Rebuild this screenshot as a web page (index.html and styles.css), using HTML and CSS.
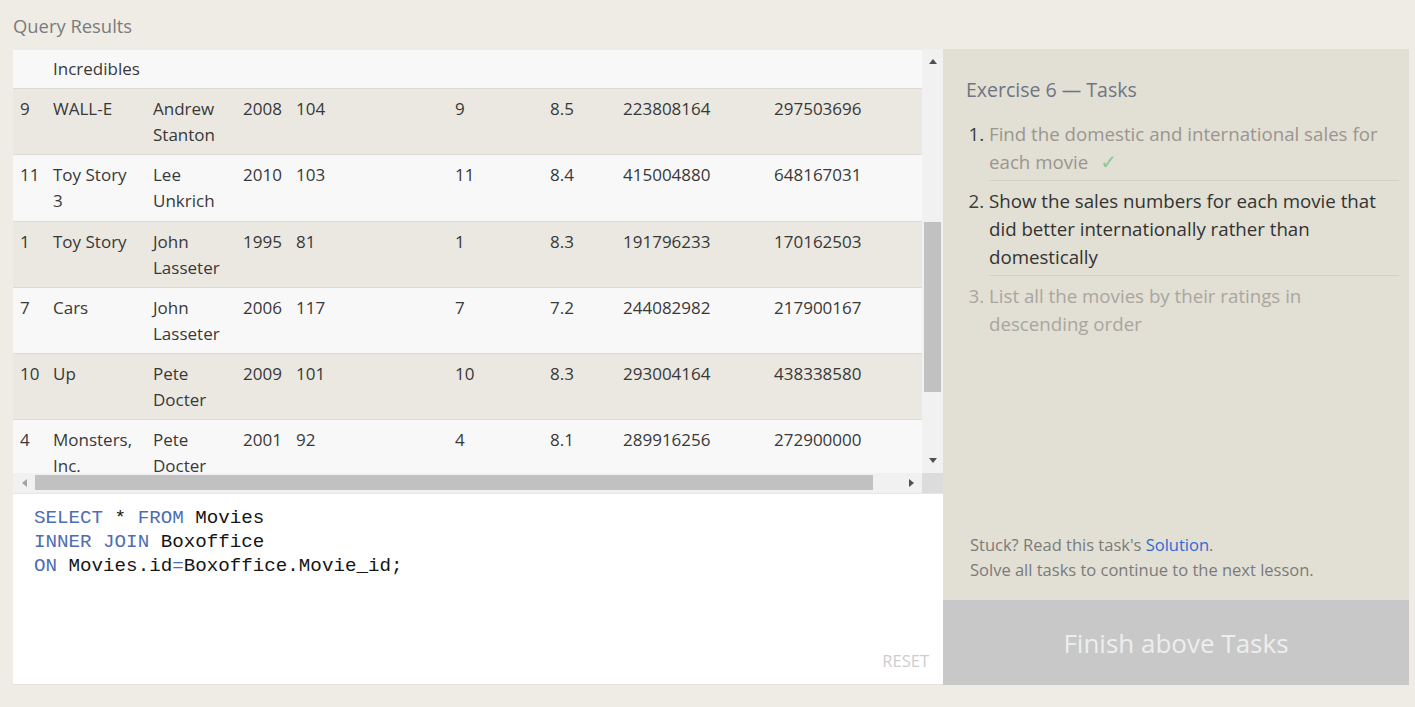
FILE: index.html
```html
<!DOCTYPE html>
<html lang="en">
<head>
<meta charset="utf-8">
<title>SQL Lesson - Exercise 6</title>
<link rel="stylesheet" href="styles.css">
</head>
<body>
<div class="page">
  <h2 class="results-title">Query Results</h2>
  <div class="workspace">
    <section class="query-pane">
      <div class="results">
        <div class="results-viewport">
          <table class="results-table">
            <colgroup>
              <col class="c-id"><col class="c-title"><col class="c-dir"><col class="c-year"><col class="c-len"><col class="c-mid"><col class="c-rating"><col class="c-dom"><col class="c-intl">
            </colgroup>
            <tbody>
              <tr class="light"><td>6</td><td class="title">The Incredibles</td><td>Brad Bird</td><td>2004</td><td>116</td><td>6</td><td>8</td><td>261441092</td><td>370001000</td></tr>
              <tr class="dark"><td>9</td><td class="title">WALL-E</td><td>Andrew Stanton</td><td>2008</td><td>104</td><td>9</td><td>8.5</td><td>223808164</td><td>297503696</td></tr>
              <tr class="light"><td>11</td><td class="title">Toy Story 3</td><td>Lee Unkrich</td><td>2010</td><td>103</td><td>11</td><td>8.4</td><td>415004880</td><td>648167031</td></tr>
              <tr class="dark"><td>1</td><td class="title">Toy Story</td><td>John Lasseter</td><td>1995</td><td>81</td><td>1</td><td>8.3</td><td>191796233</td><td>170162503</td></tr>
              <tr class="light"><td>7</td><td class="title">Cars</td><td>John Lasseter</td><td>2006</td><td>117</td><td>7</td><td>7.2</td><td>244082982</td><td>217900167</td></tr>
              <tr class="dark"><td>10</td><td class="title">Up</td><td>Pete Docter</td><td>2009</td><td>101</td><td>10</td><td>8.3</td><td>293004164</td><td>438338580</td></tr>
              <tr class="light"><td>4</td><td class="title">Monsters, Inc.</td><td>Pete Docter</td><td>2001</td><td>92</td><td>4</td><td>8.1</td><td>289916256</td><td>272900000</td></tr>
            </tbody>
          </table>
        </div>
        <div class="vscroll">
          <div class="sb-btn"><span class="tri tri-up"></span></div>
          <div class="vtrack"><div class="vthumb"></div></div>
          <div class="sb-btn"><span class="tri tri-down"></span></div>
        </div>
        <div class="hscroll">
          <div class="sb-hbtn"><span class="tri tri-left"></span></div>
          <div class="htrack"><div class="hthumb"></div></div>
          <div class="sb-hbtn"><span class="tri tri-right"></span></div>
        </div>
        <div class="sb-corner"></div>
      </div>
      <div class="editor">
<pre class="code"><span class="kw">SELECT</span> * <span class="kw">FROM</span> Movies
<span class="kw">INNER JOIN</span> Boxoffice
<span class="kw">ON</span> Movies.id<span class="kw">=</span>Boxoffice.Movie_id;</pre>
        <div class="reset">RESET</div>
      </div>
    </section>
    <aside class="task-pane">
      <div class="tasks">
        <h3 class="tasks-title">Exercise 6 — Tasks</h3>
        <ol class="task-list">
          <li class="done">Find the domestic and international sales for each movie<span class="check">✓</span></li>
          <li class="current">Show the sales numbers for each movie that did better internationally rather than domestically</li>
          <li class="todo">List all the movies by their ratings in descending order</li>
        </ol>
      </div>
      <div class="hint">
        <div>Stuck? Read this task's <a href="#">Solution</a>.</div>
        <div>Solve all tasks to continue to the next lesson.</div>
      </div>
      <div class="finish">Finish above Tasks</div>
    </aside>
  </div>
</div>
</body>
</html>
```

FILE: styles.css
```css
* { box-sizing: border-box; }

body {
  margin: 0;
  background: #efece5;
  font-family: "Open Sans", "Noto Sans", sans-serif;
}

.page {
  padding: 0 6px 22px 13px;
}

.results-title {
  margin: 0;
  height: 49px;
  padding-top: 14px;
  font-size: 18.4px;
  line-height: 24px;
  font-weight: 400;
  color: #7b7b7b;
}

.workspace {
  display: flex;
  height: 636px;
}

/* ---------- left pane ---------- */
.query-pane {
  width: 930px;
  display: flex;
  flex-direction: column;
  background: #fff;
}

.results {
  display: grid;
  grid-template-columns: 909px 21px;
  grid-template-rows: 424px 20px;
}

.results-viewport {
  overflow: hidden;
  background: #f8f8f8;
  border-top: 1px solid #ebebeb;
}

.results-table {
  width: 909px;
  table-layout: fixed;
  border-collapse: collapse;
  margin-top: -27px;
  font-size: 17px;
  line-height: 26px;
  color: #383838;
}

.c-id { width: 33px; }
.c-title { width: 100px; }
.c-dir { width: 90px; }
.c-year { width: 53px; }
.c-len { width: 159px; }
.c-mid { width: 95px; }
.c-rating { width: 73px; }
.c-dom { width: 151px; }
.c-intl { width: 155px; }

.results-table td {
  padding: 7px 7px 6.2px 7px;
  vertical-align: top;
  border-bottom: 1px solid #dddbd6;
}

.results-table td.title {
  padding-right: 12px;
}

.light { background: #f8f8f8; }
.dark { background: #eae8e1; }

/* scrollbars */
.vscroll {
  background: #f1f1f1;
  display: flex;
  flex-direction: column;
}

.sb-btn {
  height: 25px;
  display: flex;
  align-items: center;
  justify-content: center;
}

.vtrack {
  flex: 1;
  padding: 148px 2px 0;
}

.vthumb {
  height: 170px;
  background: #c1c1c1;
}

.hscroll {
  background: #f1f1f1;
  display: flex;
}

.sb-hbtn {
  width: 22px;
  display: flex;
  align-items: center;
  justify-content: center;
}

.htrack {
  flex: 1;
  padding: 2px 27px 3px 0;
}

.hthumb {
  height: 15px;
  background: #c1c1c1;
}

.sb-corner {
  background: #dcdcdc;
}

.tri {
  width: 0;
  height: 0;
  border-style: solid;
}

.tri-up {
  border-width: 0 4.5px 5px 4.5px;
  border-color: transparent transparent #505050 transparent;
}

.tri-down {
  border-width: 5px 4.5px 0 4.5px;
  border-color: #505050 transparent transparent transparent;
}

.tri-left {
  border-width: 4.5px 5px 4.5px 0;
  border-color: transparent #a3a3a3 transparent transparent;
}

.tri-right {
  border-width: 4.5px 0 4.5px 5px;
  border-color: transparent transparent transparent #505050;
}

/* editor */
.editor {
  flex: 1;
  display: flex;
  flex-direction: column;
  padding: 12px 14px 11px 21px;
  border-top: 1px solid #e6e6e6;
  border-bottom: 1px solid #e4e1d9;
}

.code {
  flex: 1;
  margin: 0;
  font-family: "Liberation Mono", "DejaVu Sans Mono", monospace;
  font-size: 19.2px;
  line-height: 24px;
  color: #151515;
}

.kw { color: #4d6db3; }

.reset {
  align-self: flex-end;
  font-size: 16.5px;
  line-height: 24px;
  color: #cdcdcd;
}

/* ---------- right pane ---------- */
.task-pane {
  width: 466px;
  display: flex;
  flex-direction: column;
  background: #e2dfd4;
}

.tasks {
  flex: 1;
  padding: 27px 10px 0 23px;
}

.tasks-title {
  margin: 0;
  font-size: 19.5px;
  line-height: 28px;
  font-weight: 400;
  color: #6e7581;
}

.task-list {
  margin: 10px 0 0;
  padding-left: 23px;
  font-size: 18.7px;
  line-height: 28px;
}

.task-list li {
  padding: 5.5px 0 4.5px;
  border-bottom: 1px solid #d3d0c6;
}

.task-list li:last-child {
  border-bottom: none;
}

.task-list li::marker {
  color: #3c3c3c;
}

.done { color: #9a9690; }
.current { color: #333; }
.todo { color: #a9a6a0; }
.task-list li.todo::marker { color: #a9a6a0; }

.check {
  margin-left: 12px;
  color: #8cc98e;
  font-family: "DejaVu Sans", sans-serif;
  font-size: 20px;
  line-height: 20px;
}

.hint {
  padding: 0 10px 18px 27px;
  font-size: 16.5px;
  line-height: 25px;
  color: #7b7b7b;
}

.hint a {
  color: #2c6cd6;
  text-decoration: none;
}

.finish {
  height: 85px;
  background: #c8c8c8;
  color: #eeeeee;
  font-size: 26px;
  display: flex;
  align-items: center;
  justify-content: center;
}
```
